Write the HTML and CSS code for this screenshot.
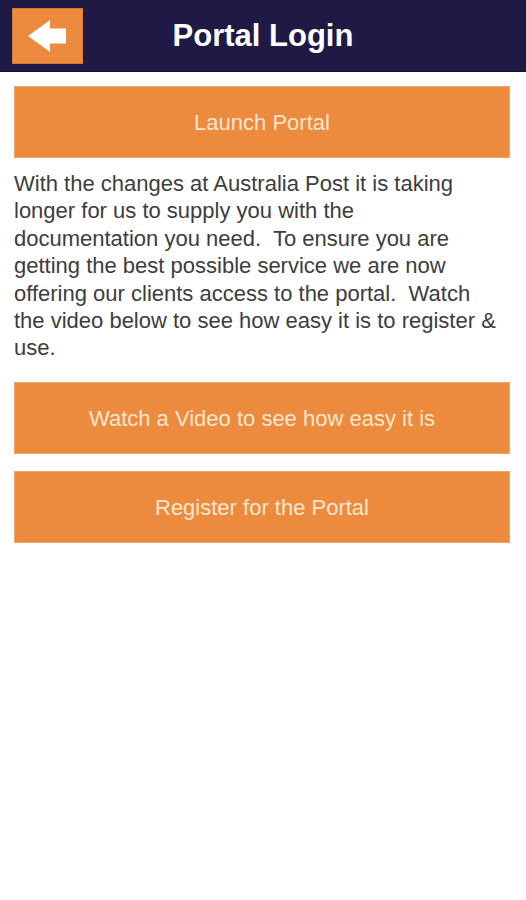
FILE: index.html
```html
<!DOCTYPE html>
<html lang="en">
<head>
<meta charset="utf-8">
<title>Portal Login</title>
<link rel="stylesheet" href="styles.css">
</head>
<body>
<header class="topbar">
  <button class="back" aria-label="Back">
    <svg width="40" height="34" viewBox="0 0 40 34" aria-hidden="true">
      <path d="M0 17 L22 1 L22 9.5 L38 9.5 L38 24.5 L22 24.5 L22 33 Z" fill="#ffffff"/>
    </svg>
  </button>
  <h1 class="title">Portal Login</h1>
</header>
<main class="content">
  <a class="btn" href="#">Launch Portal</a>
  <p class="intro">With the changes at Australia Post it is taking longer for us to supply you with the documentation you need.&nbsp; To ensure you are getting the best possible service we are now offering our clients access to the portal.&nbsp; Watch the video below to see how easy it is to register &amp; use.</p>
  <div class="actions">
    <a class="btn" href="#">Watch a Video to see how easy it is</a>
    <a class="btn" href="#">Register for the Portal</a>
  </div>
</main>
</body>
</html>
```

FILE: styles.css
```css
* { box-sizing: border-box; }
html, body { margin: 0; padding: 0; background: #ffffff; }
body {
  font-family: "Liberation Sans", Arial, sans-serif;
  width: 526px;
  min-height: 900px;
}
.topbar {
  height: 72px;
  background: #1f1a45;
  border-bottom: 1px solid #120f2a;
  display: flex;
  align-items: flex-start;
  padding: 8px 12px 0;
  position: relative;
}
.back {
  width: 71px;
  height: 56px;
  background: #ec8b3e;
  border: 1px solid #d57a33;
  padding: 0 0 0 15px;
  margin: 0;
  display: flex;
  align-items: center;
  justify-content: flex-start;
  cursor: pointer;
}
.back svg { display: block; }
.title {
  position: absolute;
  left: 0;
  right: 0;
  top: 16px;
  margin: 0;
  text-align: center;
  color: #ffffff;
  font-size: 31px;
  font-weight: bold;
  line-height: 40px;
  pointer-events: none;
}
.content {
  padding: 14px 14px 0 14px;
  display: flex;
  flex-direction: column;
}
.btn {
  display: flex;
  align-items: center;
  justify-content: center;
  height: 72px;
  width: 496px;
  background: #ec8b3e;
  border: 1px solid #f0a566;
  color: #fbe6cf;
  font-size: 22px;
  text-decoration: none;
  padding-top: 2px;
}
.intro {
  margin: 12px 8px 20px 0;
  color: #3d3d3d;
  font-size: 22px;
  line-height: 27.4px;
}
.actions {
  display: flex;
  flex-direction: column;
  gap: 17px;
}
```
